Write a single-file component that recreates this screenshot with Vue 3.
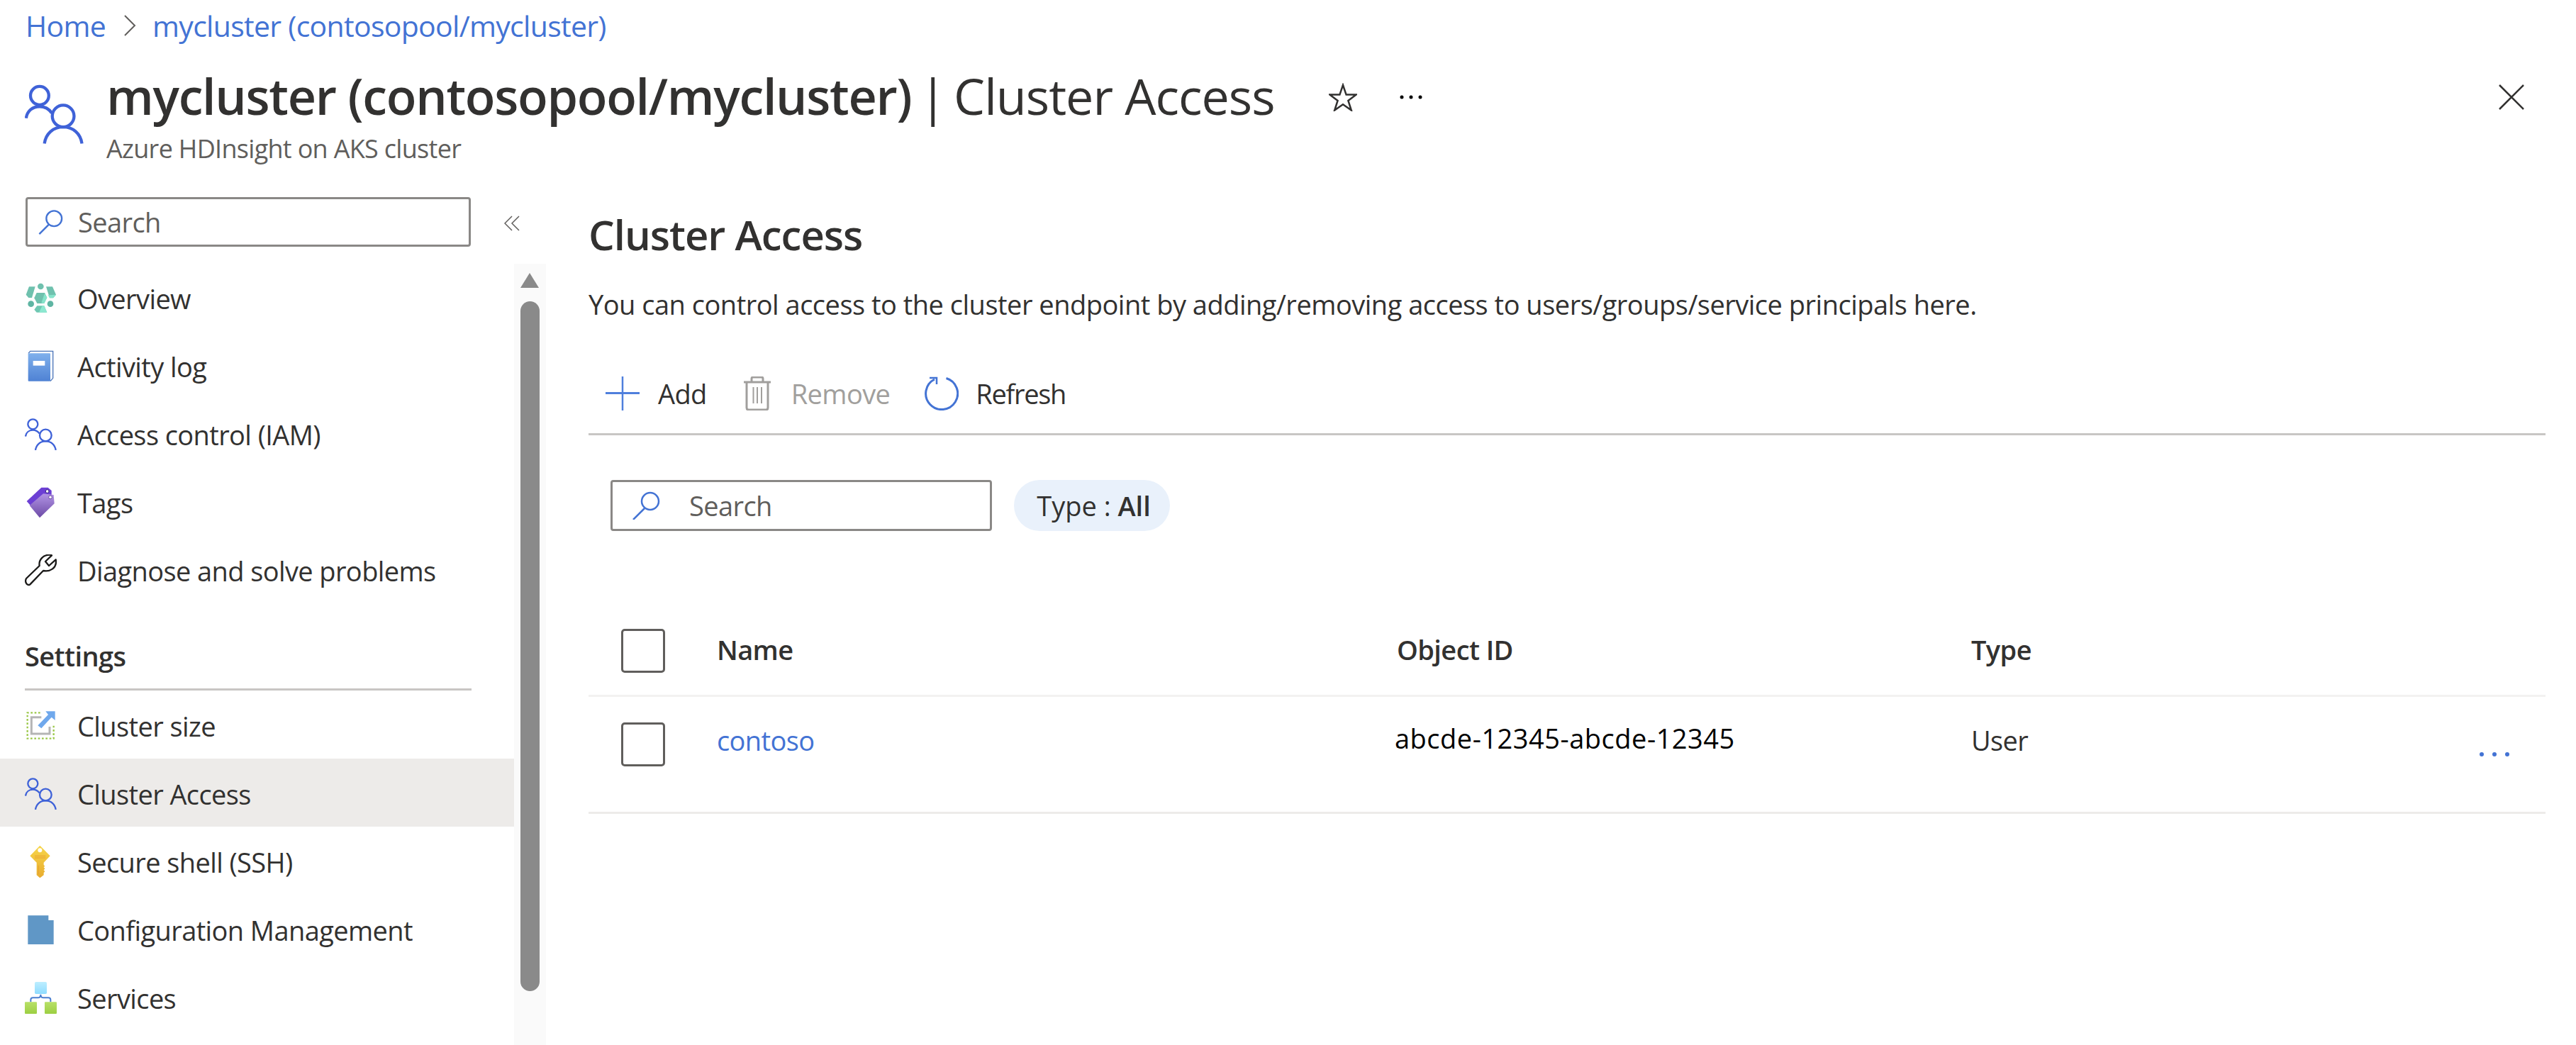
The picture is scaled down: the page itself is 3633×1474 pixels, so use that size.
<template>
  <div class="page">
    <!-- top: breadcrumb + title -->
    <nav class="crumbs">
      <a class="link">Home</a>
      <svg class="crumb-sep" viewBox="0 0 18 30" width="18" height="30"><path d="M2 1l14 14L2 29" fill="none" stroke="#605e5c" stroke-width="2" /></svg>
      <a class="link">mycluster (contosopool/mycluster)</a>
    </nav>

    <header class="title-row">
      <svg class="title-icon" viewBox="30 600 135 135" width="83" height="84">
        <g fill="none" stroke="#3f62d8" stroke-width="7">
          <circle cx="64" cy="625" r="21" />
          <path d="M33 677c2-17 15-27 31-27 11 0 21 5 28 15" />
          <circle cx="118" cy="672" r="25" />
          <path d="M75 735c3-23 20-38 43-38s40 15 43 38" />
        </g>
      </svg>
      <div class="title-text">
        <h1 class="title"><b>mycluster (contosopool/mycluster)</b> <span class="title-sep">|</span> Cluster Access</h1>
        <div class="subtitle">Azure HDInsight on AKS cluster</div>
      </div>
      <svg class="star" viewBox="0 0 40 40" width="40" height="40"><path d="M20 3l4.600 13.600h14L27.400 25l4.400 13.500L20 30.200 8.200 38.500 12.600 25 1.400 16.600h14z" fill="none" stroke="#323130" stroke-width="2.500" /></svg>
      <svg class="more" viewBox="0 0 32 6" width="32" height="6"><circle cx="3" cy="3" r="2.500" /><circle cx="16" cy="3" r="2.500" /><circle cx="29" cy="3" r="2.500" /></svg>
      <svg class="close" viewBox="0 0 36 36" width="36" height="36"><path d="M1 1l34 34M35 1L1 35" stroke="#323130" stroke-width="2.500" /></svg>
    </header>

    <div class="body">
      <aside class="sidebar">
        <div class="side-top">
          <div class="side-search">
            <svg class="search-ic" viewBox="0 0 38 38" width="37" height="36"><circle cx="24" cy="14" r="11.500" fill="none" stroke="#4373d4" stroke-width="2.500" /><path d="M16 23L2 37" stroke="#4373d4" stroke-width="2.500" /></svg>
            <span class="placeholder">Search</span>
          </div>
          <svg class="collapse" viewBox="0 0 22 22" width="22" height="22"><path d="M11 1L1 11l10 10M21 1L11 11l10 10" fill="none" stroke="#605e5c" stroke-width="1.500" /></svg>
        </div>

        <div class="side-scroll">
          <div class="menu">
            <template v-for="item in menu" :key="item.label">
              <div v-if="item.section" class="section">{{ item.label }}</div>
              <div v-else class="menu-item" :class="{ active: item.active }">
                <span class="menu-icon">
                  <!-- icons drawn at 3x, 135 units = 45px -->
                  <svg v-if="item.icon === 'overview'" viewBox="30 25 135 135" width="45" height="45">
                    <circle cx="97" cy="43" r="13" fill="#6fc1ae" />
                    <path d="M48 44h26L60 91H46L35 78z" fill="#6fc1ae" />
                    <path d="M120 44h27l15 34-12 14h-15z" fill="#6fc1ae" />
                    <path d="M128 80l34-2-12 14h-15z" fill="#86e4cb" />
                    <path d="M80 70h34l10 20-12 25H82L70 92z" fill="#6fc1ae" />
                    <path d="M114 72l10 18-12 25-12-2z" fill="#86e4cb" />
                    <circle cx="56" cy="117" r="13" fill="#5fb5a3" />
                    <circle cx="138" cy="117" r="13" fill="#5fb5a3" />
                    <path d="M82 125h30l12 28H80l-10-12z" fill="#6fc7b2" />
                    <path d="M104 125h8l12 28H90z" fill="#8ce8d0" />
                  </svg>
                  <svg v-else-if="item.icon === 'log'" viewBox="30 312 135 135" width="45" height="45">
                    <defs><linearGradient id="log-g" x1="0" y1="0" x2="0" y2="1"><stop offset="0" stop-color="#7fb0ec" /><stop offset="1" stop-color="#4f82d4" /></linearGradient></defs>
                    <path d="M45 325l8-9h96v114l-11 13" fill="#fff" stroke="#4a74b8" stroke-width="4" />
                    <rect x="44" y="325" width="94" height="118" rx="3" fill="url(#log-g)" />
                    <rect x="65" y="357" width="50" height="20" fill="#fff" />
                  </svg>
                  <svg v-else-if="item.icon === 'people'" viewBox="30 600 135 135" width="45" height="45">
                    <g fill="none" stroke="#3f62d8" stroke-width="7">
                      <circle cx="64" cy="625" r="21" />
                      <path d="M33 677c2-17 15-27 31-27 11 0 21 5 28 15" />
                      <circle cx="118" cy="672" r="25" />
                      <path d="M75 735c3-23 20-38 43-38s40 15 43 38" />
                    </g>
                  </svg>
                  <svg v-else-if="item.icon === 'tags'" viewBox="30 887 135 135" width="45" height="45">
                    <defs><linearGradient id="tag-g" x1="0" y1="0" x2="0" y2="1"><stop offset="0" stop-color="#b294e4" /><stop offset="1" stop-color="#6c4aa6" /></linearGradient></defs>
                    <path d="M38 950l62-58h28l15 13v20l-83 50z" fill="#6c3fd4" />
                    <path d="M50 968l58-50 44 5 3 37-62 60z" fill="url(#tag-g)" />
                    <circle cx="125" cy="908" r="7" fill="#fff" stroke="#3d2a80" stroke-width="3" />
                    <circle cx="138" cy="933" r="7" fill="#fff" stroke="#6a4aa0" stroke-width="3" />
                  </svg>
                  <svg v-else-if="item.icon === 'wrench'" viewBox="30 1148 135 135" width="45" height="45">
                    <path d="M36 1250l56-54c-4-26 16-46 43-46 3 0 6 1 9 2l-27 26 15 18 29-26c1 3 1 6 1 9 0 26-24 44-54 38l-56 58c-8 7-25-6-16-25z" fill="none" stroke="#1b1a19" stroke-width="7" stroke-linejoin="round" />
                  </svg>
                  <svg v-else-if="item.icon === 'resize'" viewBox="30 33 135 135" width="45" height="45">
                    <path d="M95 46H41v109h111v-55" fill="none" stroke="#9bc848" stroke-width="7" stroke-dasharray="8 8" />
                    <path d="M100 65H58v70h77v-30" fill="none" stroke="#b5b5b5" stroke-width="9" />
                    <path d="M118 40h40v38l-15-13-43 47-15-12 44-46z" fill="#6fa8ec" />
                  </svg>
                  <svg v-else-if="item.icon === 'key'" viewBox="30 609 135 135" width="45" height="45">
                    <defs><linearGradient id="key-g" x1="0" y1="0" x2="0" y2="1"><stop offset="0" stop-color="#f7d64a" /><stop offset="1" stop-color="#e8ac2f" /></linearGradient></defs>
                    <path d="M94 608l43 44-27 28v10l5 5-5 5 5 6-5 6 5 6-5 5v10l-16 12-14-12v-53l-28-28z" fill="url(#key-g)" />
                    <path d="M72 652h46M72 660h46" stroke="#e8a030" stroke-width="3" />
                    <path d="M88 692v38" stroke="#e8a030" stroke-width="3" />
                    <circle cx="94" cy="628" r="9" fill="#fff" />
                  </svg>
                  <svg v-else-if="item.icon === 'doc'" viewBox="30 896 135 135" width="45" height="45">
                    <path d="M43 903h87v20h22v102H43z" fill="#6097c6" />
                  </svg>
                  <svg v-else-if="item.icon === 'services'" viewBox="30 1185 135 135" width="45" height="45">
                    <defs>
                      <linearGradient id="srv-a" x1="0" y1="0" x2="0" y2="1"><stop offset="0" stop-color="#bdeeff" /><stop offset="1" stop-color="#8fdcff" /></linearGradient>
                      <linearGradient id="srv-b" x1="0" y1="0" x2="0" y2="1"><stop offset="0" stop-color="#b8e068" /><stop offset="1" stop-color="#9ccf42" /></linearGradient>
                    </defs>
                    <path d="M55 1270v-9q0-9 9-9h21q12 0 12-14 0 14 12 14h21q9 0 9 9v9" fill="none" stroke="#4a7fd0" stroke-width="6" />
                    <rect x="72" y="1185" width="51" height="51" rx="5" fill="url(#srv-a)" />
                    <rect x="30" y="1270" width="51" height="50" rx="3" fill="url(#srv-b)" />
                    <rect x="114" y="1270" width="51" height="50" rx="3" fill="url(#srv-b)" />
                  </svg>
                </span>
                <span>{{ item.label }}</span>
              </div>
            </template>
          </div>
          <div class="scrollbar">
            <span class="arrow-up"></span>
            <span class="thumb"></span>
          </div>
        </div>
      </aside>

      <main class="main">
        <h2 class="heading">Cluster Access</h2>
        <p class="intro">You can control access to the cluster endpoint by adding/removing access to users/groups/service principals here.</p>

        <div class="toolbar">
          <button class="tool add">
            <svg viewBox="0 0 48 48" width="48" height="48"><path d="M24 0v48" stroke="#4f7fdc" stroke-width="2.500" /><path d="M0 23.500h48" stroke="#4f7fdc" stroke-width="3" /></svg>
            <span>Add</span>
          </button>
          <button class="tool remove">
            <svg viewBox="0 0 38 48" width="38" height="48" fill="none" stroke="#a19f9d" stroke-width="3">
              <path d="M0 8h38M11 7V3q0-2 2-2h12q2 0 2 2v4M4 8v36q0 3 3 3h24q3 0 3-3V8" />
              <path d="M13.500 15v23M19 15v23M25 15v23" stroke-width="2" />
            </svg>
            <span>Remove</span>
          </button>
          <button class="tool refresh">
            <svg viewBox="0 0 48 48" width="48" height="48" fill="none" stroke="#4373d4" stroke-width="3"><path d="M30.500 2.500A22.500 22.500 0 1 1 14 4" /><path d="M7 2h10v9" stroke-width="2.500" /></svg>
            <span>Refresh</span>
          </button>
        </div>

        <div class="filters">
          <div class="filter-search">
            <svg viewBox="0 0 40 40" width="40" height="40"><circle cx="26" cy="14" r="12" fill="none" stroke="#4373d4" stroke-width="2.500" /><path d="M18 24L2 40" stroke="#4373d4" stroke-width="2.500" /></svg>
            <span class="placeholder">Search</span>
          </div>
          <div class="pill">Type : <b>All</b></div>
        </div>

        <div class="grid-row head">
          <span class="check"></span>
          <span class="cell">Name</span>
          <span class="cell">Object ID</span>
          <span class="cell">Type</span>
        </div>
        <div v-for="row in rows" :key="row.id" class="grid-row item">
          <span class="check"></span>
          <a class="cell link">{{ row.name }}</a>
          <span class="cell oid">{{ row.id }}</span>
          <span class="cell">{{ row.type }}</span>
          <svg class="row-more" viewBox="0 0 42 6" width="42" height="6"><circle cx="3" cy="3" r="3" /><circle cx="21" cy="3" r="3" /><circle cx="39" cy="3" r="3" /></svg>
        </div>
      </main>
    </div>
  </div>
</template>

<script setup>
const menu = [
  { label: 'Overview', icon: 'overview' },
  { label: 'Activity log', icon: 'log' },
  { label: 'Access control (IAM)', icon: 'people' },
  { label: 'Tags', icon: 'tags' },
  { label: 'Diagnose and solve problems', icon: 'wrench' },
  { label: 'Settings', section: true },
  { label: 'Cluster size', icon: 'resize' },
  { label: 'Cluster Access', icon: 'people', active: true },
  { label: 'Secure shell (SSH)', icon: 'key' },
  { label: 'Configuration Management', icon: 'doc' },
  { label: 'Services', icon: 'services' }
]

const rows = [
  { name: 'contoso', id: 'abcde-12345-abcde-12345', type: 'User' }
]
</script>

<style scoped>
.page {
  width: 3633px;
  height: 1474px;
  overflow: hidden;
  background: #fff;
  color: #323130;
  font-family: "Open Sans", "Liberation Sans", sans-serif;
  font-size: 38px;
  letter-spacing: -0.6px;
}

.link {
  color: #4373d4;
}

.crumbs {
  height: 72px;
  padding-left: 36px;
  display: flex;
  align-items: center;
  font-size: 41px;
  letter-spacing: -0.7px;
}

.crumb-sep {
  margin: 0 23px 0 25px;
}

.title-row {
  height: 190px;
  display: flex;
  padding-left: 35px;
  position: relative;
}

.title-icon {
  margin-top: 47px;
}

.title-text {
  margin-left: 32px;
  width: 1691px;
  padding-top: 28px;
}

.title {
  margin: 0;
  font-size: 70px;
  line-height: 70px;
  font-weight: 400;
  letter-spacing: -1px;
  white-space: nowrap;
}

.title b {
  font-weight: 600;
  letter-spacing: -1.3px;
}

.title-sep {
  margin: 0 -6px;
}

.subtitle {
  margin-top: 21px;
  font-size: 36px;
  line-height: 38px;
  letter-spacing: -0.7px;
  color: #605e5c;
}

.star {
  margin: 45px 0 0 33px;
}

.more {
  margin: 62px 0 0 60px;
}

.close {
  position: absolute;
  left: 3524px;
  top: 47px;
}

.body {
  display: flex;
}

.sidebar {
  width: 770px;
  flex: none;
}

.side-top {
  height: 110px;
  padding: 16px 0 0 36px;
  display: flex;
  box-sizing: border-box;
}

.side-search {
  width: 628px;
  height: 70px;
  box-sizing: border-box;
  border: 3px solid #8a8886;
  border-radius: 4px;
  display: flex;
  align-items: center;
  padding-left: 14px;
  gap: 20px;
}

.placeholder {
  color: #605e5c;
}

.collapse {
  margin: 26px 0 0 47px;
}

.side-scroll {
  display: flex;
}

.menu {
  width: 725px;
  padding-top: 2px;
}

.menu-item {
  height: 96px;
  box-sizing: border-box;
  display: flex;
  align-items: center;
  padding: 0 0 3px 35px;
  gap: 29px;
}

.section ~ .menu-item {
  padding: 3px 0 0 35px;
}

.menu-item.active {
  background: #edebe9;
}

.menu-icon {
  width: 45px;
  height: 45px;
  display: flex;
  align-items: center;
  justify-content: center;
}

.section {
  margin: 0 60px 0 35px;
  height: 120px;
  box-sizing: border-box;
  border-bottom: 3px solid #c8c6c4;
  padding-top: 50px;
  font-weight: 600;
  line-height: 42px;
}

.scrollbar {
  width: 45px;
  height: 1102px;
  background: #fafafa;
  position: relative;
}

.arrow-up {
  position: absolute;
  left: 9px;
  top: 13px;
  width: 0;
  height: 0;
  border-left: 13.5px solid transparent;
  border-right: 13.5px solid transparent;
  border-bottom: 21px solid #8a8a8a;
}

.thumb {
  position: absolute;
  left: 9px;
  top: 53px;
  width: 27px;
  height: 973px;
  border-radius: 14px;
  background: #8a8a8a;
}

.main {
  margin-left: 60px;
  width: 2760px;
  padding-top: 39px;
}

.heading {
  margin: 0;
  font-size: 58px;
  line-height: 60px;
  font-weight: 600;
  letter-spacing: -1px;
}

.intro {
  margin: 48px 0 0;
  line-height: 40px;
  letter-spacing: -0.5px;
  white-space: nowrap;
}

.toolbar {
  margin-top: 49px;
  height: 116px;
  box-sizing: border-box;
  border-bottom: 3px solid #c8c6c4;
  display: flex;
  align-items: center;
  padding-left: 24px;
  gap: 52px;
}

.tool {
  display: flex;
  align-items: center;
  gap: 26px;
  padding: 0;
  border: 0;
  background: none;
  font: inherit;
  letter-spacing: inherit;
  color: #323130;
}

.tool.remove {
  color: #a19f9d;
  gap: 29px;
}

.tool.refresh {
  margin-left: -3px;
  gap: 24px;
  letter-spacing: -1.3px;
}

.filters {
  margin-top: 63px;
  padding-left: 31px;
  display: flex;
  gap: 31px;
}

.filter-search {
  width: 538px;
  height: 72px;
  box-sizing: border-box;
  border: 3px solid #8a8886;
  border-radius: 4px;
  display: flex;
  align-items: center;
  padding-left: 27px;
  gap: 41px;
}

.pill {
  width: 220px;
  height: 72px;
  box-sizing: border-box;
  padding-left: 5px;
  border-radius: 36px;
  background: #e9f1fb;
  display: flex;
  align-items: center;
  justify-content: center;
  white-space: pre;
  letter-spacing: 0;
}

.pill b {
  font-weight: 600;
}

.grid-row {
  display: grid;
  grid-template-columns: 181px 959px 810px 1fr;
  box-sizing: border-box;
  position: relative;
}

.grid-row.head {
  margin-top: 106px;
  height: 128px;
  border-bottom: 3px solid #f3f2f1;
  align-items: center;
  font-weight: 600;
}

.grid-row.head .cell {
  margin-top: -3px;
}

.grid-row.item {
  height: 165px;
  border-bottom: 3px solid #edebe9;
  padding-top: 36px;
}

.grid-row.item .cell {
  margin-top: 5px;
  line-height: 40px;
}

.grid-row.item .oid {
  color: #000;
  margin: 2px 0 0 -3px;
  letter-spacing: 0.5px;
}

.check {
  margin-left: 46px;
  width: 62px;
  height: 62px;
  box-sizing: border-box;
  border: 3px solid #605e5c;
  border-radius: 5px;
}

.row-more {
  position: absolute;
  right: 51px;
  top: 78px;
  fill: #4373d4;
}
</style>

<style>
html,
body {
  margin: 0;
  background: #fff;
}
</style>
